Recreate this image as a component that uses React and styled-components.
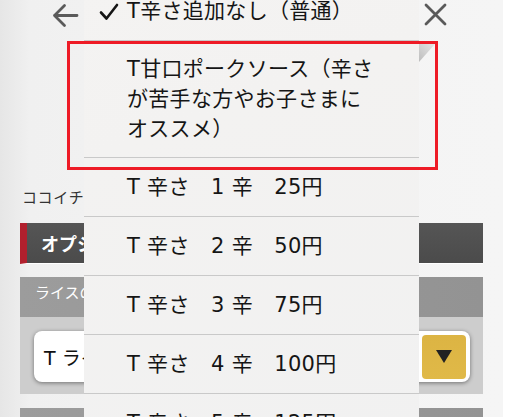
import styled, { createGlobalStyle } from 'styled-components';

const GlobalStyle = createGlobalStyle`
  html, body {
    margin: 0;
    padding: 0;
    background: #ffffff;
  }
  body {
    font-family: "Noto Sans CJK JP", "Noto Sans", sans-serif;
  }
`;

const Screen = styled.div`
  position: relative;
  width: 530px;
  height: 417px;
  overflow: hidden;
  display: flex;
  background: #ffffff;
`;

const Panel = styled.div`
  width: 503px;
  flex-shrink: 0;
  height: 100%;
  overflow: hidden;
  background: linear-gradient(to right, #e6e6e6 0px, #f0f0f0 30px, #f3f3f3 200px, #f5f5f5 100%);
`;

const Header = styled.div`
  height: 30px;
  display: flex;
  align-items: flex-start;
  justify-content: space-between;
  padding: 3px 56px 0 51px;
  box-sizing: border-box;
`;

const Lead = styled.p`
  margin: 158px 0 0 22px;
  font-size: 15px;
  line-height: 18px;
  letter-spacing: 0.6px;
  color: #333;
  white-space: nowrap;
`;

const SectionBar = styled.div`
  margin: 17px 20px 0 20px;
  height: 40px;
  background: linear-gradient(to bottom, #555555, #4b4b4b);
  border-left: 7px solid #b1202d;
  border-bottom: 1px solid #ffffff;
  display: flex;
  align-items: center;
  padding-left: 14px;
  color: #fff;
  font-size: 18px;
  font-weight: 700;
`;

const Group = styled.div`
  margin: ${(p) => p.$top}px 20px 0 20px;
`;

const GroupTitle = styled.div`
  height: 40px;
  background: linear-gradient(to right, #9c9c9c, #939393);
  color: #fff;
  font-size: 15px;
  padding: 4px 0 0 15px;
  box-sizing: border-box;
`;

const GroupBody = styled.div`
  background: #cdcdcd;
  padding: 14px 13px 12px 14px;
`;

const SelectBox = styled.div`
  height: 51px;
  background: #fff;
  border-radius: 8px;
  box-shadow: 0 1px 4px rgba(0, 0, 0, 0.45);
  display: flex;
  align-items: center;
  justify-content: space-between;
  padding: 0 4px 0 10px;
  box-sizing: border-box;
  font-family: "DejaVu Sans", "Noto Sans CJK JP", sans-serif;
  font-size: 19px;
  color: #111;
`;

const SelectButton = styled.div`
  width: 44px;
  height: 44px;
  border-radius: 4px;
  background: linear-gradient(to bottom, #dcb443, #e0b948);
  display: flex;
  align-items: center;
  justify-content: center;
`;

const Menu = styled.div`
  position: absolute;
  left: 84px;
  top: -18px;
  width: 335px;
  background: linear-gradient(160deg, #f4f3f2 0%, #f3f2f1 30%, #f1f1f1 100%);
  color: #151515;
  font-family: "DejaVu Sans", "Noto Sans CJK JP", sans-serif;
  font-size: 21px;
`;

const Item = styled.div`
  height: ${(p) => (p.$tall ? 116 : 58)}px;
  border-bottom: 1px solid #c9c9c9;
  display: flex;
  align-items: center;
  padding-left: 43px;
  line-height: 30px;
  letter-spacing: 0.3px;
  white-space: nowrap;
  position: relative;
`;

const Check = styled.svg`
  position: absolute;
  left: 15px;
  top: 21px;
`;

const Highlight = styled.div`
  position: absolute;
  left: 67px;
  top: 41px;
  width: 371px;
  height: 129px;
  border: 3px solid #ee1b26;
  box-sizing: border-box;
  pointer-events: none;
`;

const Curl = styled.svg`
  position: absolute;
  left: 419px;
  top: 44px;
`;

const Rest = styled.div`
  flex: 1;
  background: #ffffff;
`;

const rows = [
  'T 辛さ　1 辛　25円',
  'T 辛さ　2 辛　50円',
  'T 辛さ　3 辛　75円',
  'T 辛さ　4 辛　100円',
  'T 辛さ　5 辛　125円',
];

export default function App() {
  return (
    <>
      <GlobalStyle />
      <Screen>
        <Panel>
          <Header>
            <svg width="28" height="25" viewBox="0 0 28 25">
              <path d="M26 12.5H3.5M13.5 2.5L3.5 12.5L13.5 22.5" fill="none" stroke="#5a5a5a" strokeWidth="2.8" strokeLinecap="round" strokeLinejoin="round" />
            </svg>
            <svg width="23" height="23" viewBox="0 0 23 23">
              <path d="M2 2L21 21M21 2L2 21" fill="none" stroke="#5a5a5a" strokeWidth="2.8" strokeLinecap="round" />
            </svg>
          </Header>
          <Lead>ココイチのトッピングをお選びください</Lead>
          <SectionBar>オプション</SectionBar>
          <Group $top={13}>
            <GroupTitle>ライスの量</GroupTitle>
            <GroupBody>
              <SelectBox>
                <span>T ライス　300g（普通）</span>
                <SelectButton>
                  <svg width="18" height="15" viewBox="0 0 18 15">
                    <path d="M1 1H17L9 14Z" fill="#222" />
                  </svg>
                </SelectButton>
              </SelectBox>
            </GroupBody>
          </Group>
          <Group $top={14}>
            <GroupTitle>ソースの量</GroupTitle>
          </Group>
        </Panel>
        <Rest />

        <Menu>
          <Item>
            <Check width="20" height="18" viewBox="0 0 20 18">
              <path d="M2 9.5L7.5 15.5L18 2" fill="none" stroke="#151515" strokeWidth="2.6" strokeLinecap="round" strokeLinejoin="round" />
            </Check>
            T辛さ追加なし（普通）
          </Item>
          <Item $tall>
            <span>
              T甘口ポークソース（辛さ
              <br />
              が苦手な方やお子さまに
              <br />
              オススメ）
            </span>
          </Item>
          {rows.map((r) => (
            <Item key={r}>{r}</Item>
          ))}
        </Menu>
        <Curl width="16" height="18" viewBox="0 0 16 18">
          <defs>
            <linearGradient id="curl" x1="0" y1="1" x2="1" y2="0">
              <stop offset="0" stopColor="#bdbdbd" />
              <stop offset="1" stopColor="#e6e6e6" />
            </linearGradient>
          </defs>
          <path d="M0 0H16L0 18Z" fill="url(#curl)" />
        </Curl>
        <Highlight />
      </Screen>
    </>
  );
}
